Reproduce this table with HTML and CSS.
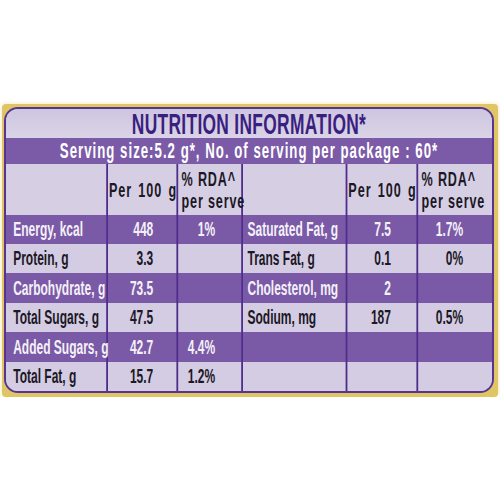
FILE: index.html
```html
<!DOCTYPE html>
<html lang="en">
<head>
  <meta charset="UTF-8">
  <title>Nutrition Information</title>
  <link rel="stylesheet" href="styles.css">
</head>
<body>
  <!-- GOLD FRAME AROUND THE LABEL -->
  <div class="rotulo">
    <div class="painel">
      <div class="conteudo">
        <div class="titulo">NUTRITION INFORMATION*</div>
        <div class="faixa">Serving size:5.2 g*, No. of serving per package : 60*</div>

        <table class="tabela">
          <colgroup>
            <col class="c-nome"><col class="c-valor"><col class="c-rda">
            <col class="c-nome2"><col class="c-valor2"><col class="c-rda2">
          </colgroup>
          <tr class="cabecalho">
            <td></td>
            <td class="per">Per 100 g</td>
            <td class="rda">% RDA^<br>per serve</td>
            <td></td>
            <td class="per">Per 100 g</td>
            <td class="rda">% RDA^<br>per serve</td>
          </tr>
          <tr class="escura">
            <td>Energy, kcal</td><td>448</td><td>1%</td>
            <td>Saturated Fat, g</td><td>7.5</td><td>1.7%</td>
          </tr>
          <tr class="clara">
            <td>Protein, g</td><td>3.3</td><td></td>
            <td>Trans Fat, g</td><td>0.1</td><td>0%</td>
          </tr>
          <tr class="escura alta">
            <td>Carbohydrate, g</td><td>73.5</td><td></td>
            <td>Cholesterol, mg</td><td>2</td><td></td>
          </tr>
          <tr class="clara">
            <td>Total Sugars, g</td><td>47.5</td><td></td>
            <td>Sodium, mg</td><td>187</td><td>0.5%</td>
          </tr>
          <tr class="escura alta">
            <td>Added Sugars, g</td><td>42.7</td><td>4.4%</td>
            <td></td><td></td><td></td>
          </tr>
          <tr class="clara">
            <td>Total Fat, g</td><td>15.7</td><td>1.2%</td>
            <td></td><td></td><td></td>
          </tr>
        </table>
      </div>
    </div>
  </div>
</body>
</html>
```

FILE: styles.css
```css
body {
  margin: 0;
  padding: 0;
  background-color: #ffffff;
  font-family: "Liberation Sans Narrow", "Liberation Sans", sans-serif;
  overflow: hidden;
}

/* moldura dourada */
.rotulo {
  margin: 104px 0 0 2px;
  width: 496px;
  height: 293px;
  box-sizing: border-box;
  padding: 3px 4px 4px 2px;
  background-color: #e0c565;
  border-radius: 4px;
  box-shadow: 0 0 5px #f4e6b0;
}

.painel {
  height: 286px;
  box-sizing: border-box;
  border: 2px solid #573490;
  border-radius: 14px;
  background-color: #d6cfe4;
  overflow: hidden;
}

/* texto condensado: largura real 486px */
.conteudo {
  width: 810px;
  transform: scaleX(0.6);
  transform-origin: 0 0;
}

.titulo {
  height: 28px;
  padding-top: 1px;
  background: linear-gradient(#cec5df, #dad4e7);
  color: #3a1f80;
  font-size: 29px;
  font-weight: bold;
  letter-spacing: 0.5px;
  line-height: 28px;
  text-align: center;
}

.faixa {
  height: 26px;
  background-color: #7b5ba7;
  color: #ffffff;
  font-size: 22px;
  font-weight: bold;
  letter-spacing: 1.7px;
  line-height: 26px;
  text-align: center;
}

.tabela {
  width: 810px;
  border-collapse: collapse;
  table-layout: fixed;
  font-size: 20px;
  font-weight: bold;
}

.c-nome { width: 168px; }
.c-valor { width: 117px; }
.c-rda { width: 108px; }
.c-nome2 { width: 174px; }
.c-valor2 { width: 118px; }
.c-rda2 { width: 125px; }

.tabela td {
  padding: 0;
  white-space: nowrap;
  border-left: 3.3px solid #4e2d8c;
  text-align: right;
}

.tabela td:nth-child(1) {
  border-left: none;
  text-align: left;
  padding-left: 12px;
}

.tabela td:nth-child(2) { padding-right: 38px; }
.tabela td:nth-child(3) { padding-right: 43px; }
.tabela td:nth-child(4) { text-align: left; padding-left: 8px; }
.tabela td:nth-child(5) { padding-right: 42px; }
.tabela td:nth-child(6) { padding-right: 48px; }

.cabecalho {
  height: 51px;
  background-color: #d6cfe4;
  color: #1c1826;
}

.cabecalho td.per {
  text-align: center;
  padding: 0 0 0 2px;
  font-size: 21px;
  letter-spacing: 1.6px;
  word-spacing: 3px;
}

.cabecalho td.rda {
  text-align: left;
  padding: 0 0 0 6px;
  font-size: 21px;
  letter-spacing: 1.4px;
  line-height: 22px;
}

.escura {
  height: 29px;
  background-color: #7a5aa6;
  color: #f4f0f8;
}

.clara {
  height: 29px;
  background-color: #d4cce2;
  color: #1c1826;
}

.alta {
  height: 30px;
}
```
